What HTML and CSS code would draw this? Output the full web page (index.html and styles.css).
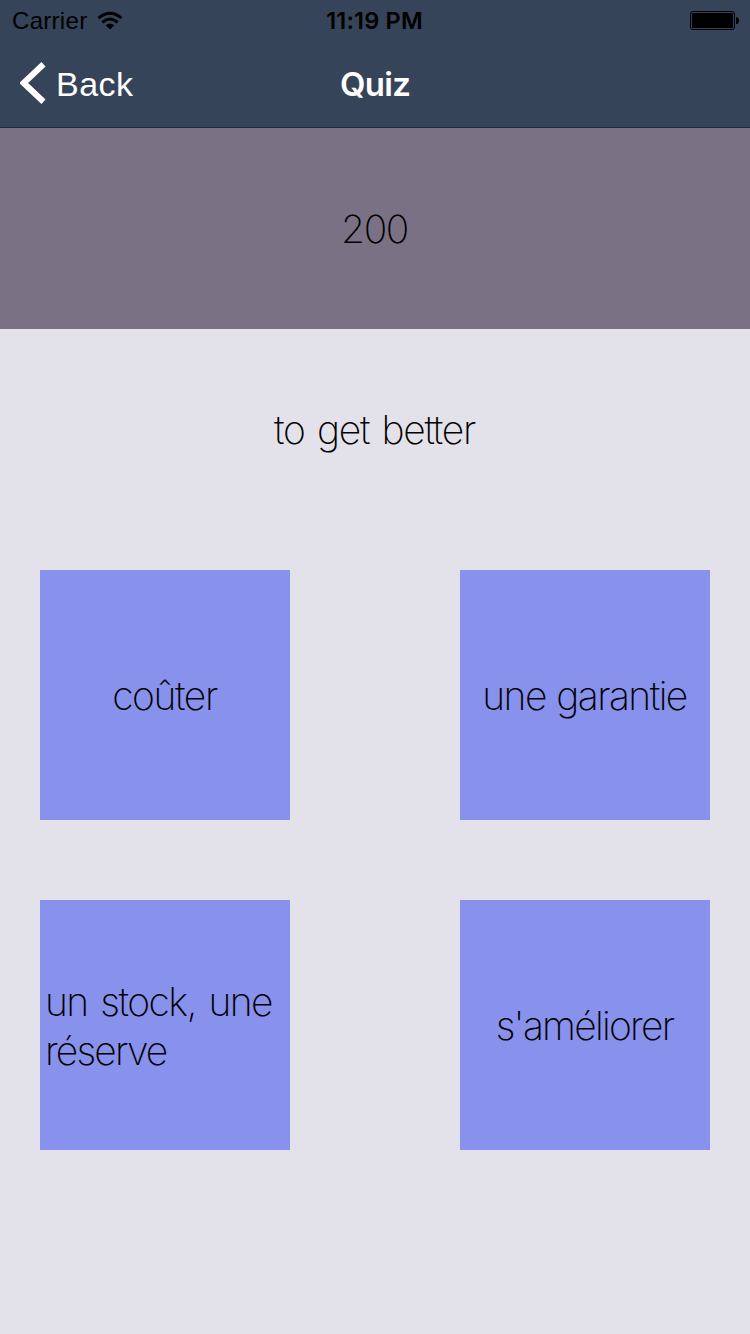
FILE: index.html
```html
<!DOCTYPE html>
<html lang="en">
<head>
<meta charset="utf-8">
<title>Quiz</title>
<link rel="stylesheet" href="styles.css">
</head>
<body>
<header class="header">
  <div class="status">
    <div class="carrier"><span>Carrier</span>
      <svg class="wifi" width="26" height="20" viewBox="0 0 26 20"><g fill="none" stroke="#000" stroke-width="3"><path d="M1.5 7.2Q13-2.8 24.5 7.2"/><path d="M5.3 11.3Q13 4.7 20.7 11.3"/></g><path d="M8.7 14.3Q13 10.7 17.3 14.3L13 18.6Z"/></svg>
    </div>
    <div class="time">11:19 PM</div>
    <svg class="battery" width="50" height="20" viewBox="0 0 50 20"><rect x=".5" y=".5" width="44" height="18" rx="2.5" fill="none" stroke="#000"/><rect x="2" y="2" width="41" height="15" rx="1"/><path d="M46 6.3Q49 6.3 49 9.7T46 13Z"/></svg>
  </div>
  <nav class="nav">
    <div class="back"><svg width="26" height="42" viewBox="0 0 26 42"><path d="M23.5 2.3L3.7 21L23.5 39.7" fill="none" stroke="#fff" stroke-width="6"/></svg><span>Back</span></div>
    <h1 class="title">Quiz</h1>
  </nav>
</header>
<section class="score"><span class="t-score">200</span></section>
<section class="question"><span class="t-question">to get better</span></section>
<main class="answers">
  <div class="answer"><span class="t-couter">coûter</span></div>
  <div class="answer"><span class="t-garantie">une garantie</span></div>
  <div class="answer multiline"><span class="t-stock">un stock, une<br><span class="t-reserve">réserve</span></span></div>
  <div class="answer"><span class="t-ameliorer">s'améliorer</span></div>
</main>
</body>
</html>
```
FILE: styles.css
```css
* { box-sizing: border-box; }
body { margin: 0; width: 750px; height: 1334px; background: #e3e2eb; color: #000; font: 200 39px/49px Inter, sans-serif; letter-spacing: -1.4px; white-space: nowrap; overflow: hidden; }
svg { display: block; flex: none; }
.header { height: 128px; background: #354458; border-bottom: 1px solid #222c38; letter-spacing: 0; }
.status { height: 40px; display: grid; grid-template-columns: 1fr auto 1fr; align-items: center; padding: 1px 10px 0 12px; }
.carrier { display: flex; gap: 10px; align-items: center; font: 400 24px/40px "Liberation Sans", sans-serif; letter-spacing: .3px; }
.time { padding-right: 3px; font: 600 23.5px/40px Inter, sans-serif; letter-spacing: .2px; }
.battery { justify-self: end; }
.nav { height: 87px; display: grid; grid-template-columns: 1fr auto 1fr; align-items: center; padding: 0 20px 2px; color: #fff; }
.back { display: flex; align-items: center; gap: 10px; font: 400 34px/40px "Liberation Sans", sans-serif; letter-spacing: .5px; }
.back span { padding-top: 2px; }
.title { margin: 0; padding-top: 2px; font: 600 33px/40px Inter, sans-serif; letter-spacing: -.7px; }
.score { height: 201px; background: #7a7185; display: flex; align-items: center; justify-content: center; }
.question { height: 201px; display: flex; align-items: center; justify-content: center; }
.t-score { letter-spacing: -1.4px; padding-right: 1px; }
.t-question { letter-spacing: -1.3px; word-spacing: 2.8px; padding-right: 1px; }
.answers { display: grid; grid-template-columns: 250px 250px; grid-auto-rows: 250px; justify-content: space-between; row-gap: 80px; padding: 40px 40px 0; }
.answer { background: #8891eb; display: flex; align-items: center; justify-content: center; padding-top: 1px; }
.answer:not(.multiline) { padding-right: 1px; }
.multiline { justify-content: flex-start; padding: 2px 0 0 5px; }
.t-garantie { letter-spacing: -1.55px; word-spacing: 1px; }
.t-stock { letter-spacing: -1.5px; word-spacing: 3px; }
.t-reserve { letter-spacing: -1.85px; }
.t-ameliorer { letter-spacing: -1.75px; }
```
